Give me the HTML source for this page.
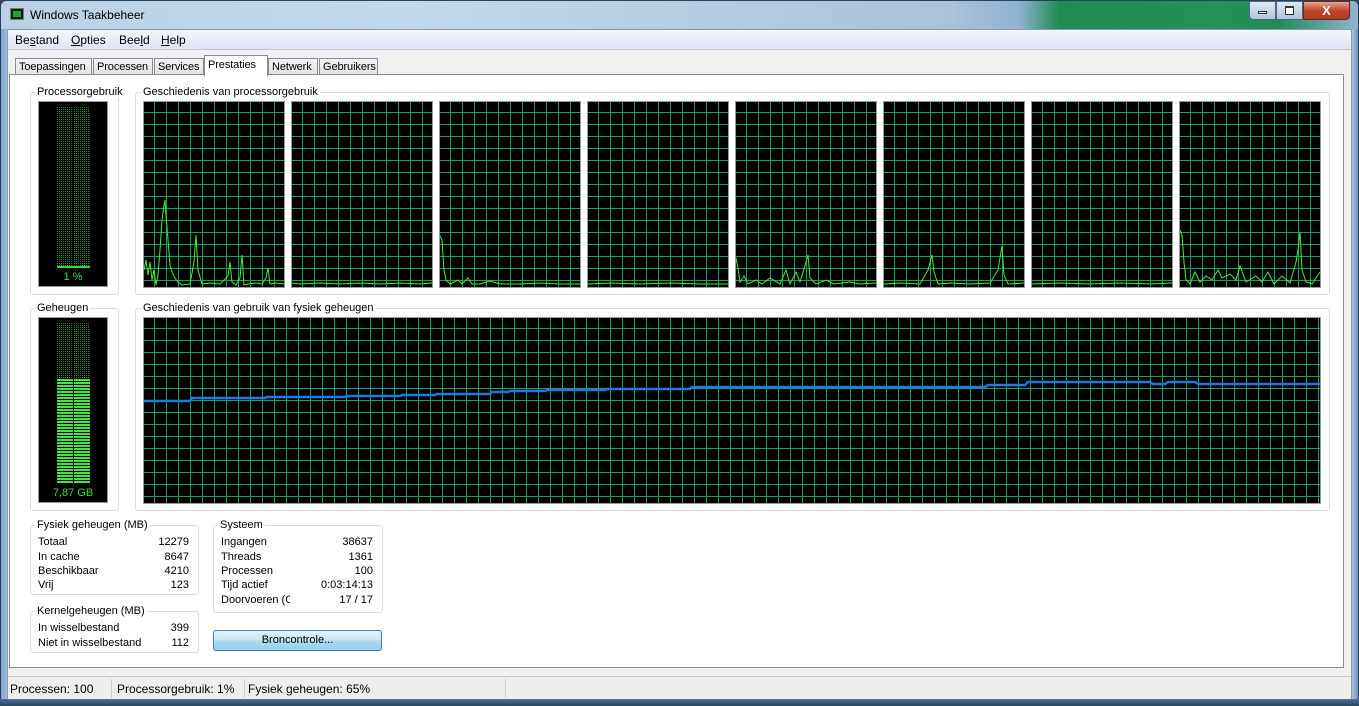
<!DOCTYPE html>
<html><head><meta charset="utf-8">
<style>
*{margin:0;padding:0;box-sizing:border-box}
body{width:1359px;height:706px;overflow:hidden;font-family:"Liberation Sans",sans-serif;font-size:11px;color:#000;background:#2b4a6b;position:relative}
.abs{position:absolute}
#frame{left:0;top:0;width:1359px;height:706px;background:linear-gradient(90deg,#7fa5c9 0,#a9c5e0 8px,#a9c5e0 1351px,#5f86ad 1359px);border:1px solid #2a3f57;border-radius:6px 6px 0 0}
#tbar{left:1px;top:1px;width:1357px;height:28px;background:linear-gradient(90deg,#b9d0e6 0,#c3d8ec 30%,#a9c2dc 70%,#8fb3d2 75%,#1f8a52 78%,#24915a 90%,#1e8a55 94%,#8fb3d2 100%);border-radius:6px 6px 0 0}
#bot{left:0;top:699px;width:1359px;height:7px;background:linear-gradient(#4f6f90,#2a4563)}
#title{left:30px;top:8px;font-size:12px;color:#000}
#client{left:7px;top:29px;width:1345px;height:670px;background:#f0f0f0;border:1px solid #8a9bb0}
#menu{left:8px;top:30px;width:1343px;height:20px;background:linear-gradient(#f3f6fb,#dde4f2);border-bottom:1px solid #b9c4d8}
#menu span{position:absolute;top:3px;font-size:12px}
.tab{position:absolute;top:58px;height:17px;border:1px solid #898c95;border-bottom:none;background:linear-gradient(#f2f2f2,#e3e3e3);font-size:11px;padding:2px 3px 0;letter-spacing:-0.1px}
#panel{left:9px;top:74px;width:1335px;height:594px;background:#fff;border:1px solid #898c95}
.grp{position:absolute;border:1px solid #dcdcdc;border-radius:3px}
.lbl{position:absolute;background:#fff;padding:0 2px;font-size:11px}
.grid{position:absolute;background-color:#000;border:1px solid #9a9a9a;
background-image:linear-gradient(90deg,#229a5a 0,#229a5a 1px,transparent 1px),linear-gradient(#229a5a 0,#229a5a 1px,transparent 1px);background-size:12px 12px,12px 12px;background-position:10px 10px}
.meter{position:absolute;background:#000;border:1px solid #9a9a9a}
.dots{position:absolute;width:16px;background:repeating-linear-gradient(90deg,#1f8a1f 0 1px,#000 1px 2px),#000;-webkit-mask:repeating-linear-gradient(#000 0 1px,transparent 1px 2px);mask:repeating-linear-gradient(#000 0 1px,transparent 1px 2px)}
.row{position:absolute;font-size:11px;white-space:nowrap}
.r{position:absolute;text-align:right}
#status{left:8px;top:676px;width:1343px;height:23px;background:#f0eeed;border-top:1px solid #c9c9c9}
#status span{position:absolute;top:5px;font-size:12px}
.sep{position:absolute;top:2px;width:1px;height:19px;background:#cfcfcf}
</style></head><body>
<div id="frame" class="abs"></div>
<div id="tbar" class="abs"></div>
<div id="bot" class="abs"></div>
<div class="abs" style="left:10px;top:8px;width:14px;height:12px;background:#0a2a0a;border:1px solid #777"><div style="margin:2px;height:6px;background:#2c9a3c"></div></div>
<div id="title" class="abs">Windows Taakbeheer</div>
<div class="abs" style="left:1249px;top:1px;width:27px;height:19px;border:1px solid #4d6785;border-radius:0 0 0 4px;background:linear-gradient(#dfe9f4,#aec4dc)"><div style="margin:9px 8px 0;height:3px;background:#fff;border:1px solid #333"></div></div>
<div class="abs" style="left:1276px;top:1px;width:27px;height:19px;border:1px solid #4d6785;background:linear-gradient(#dfe9f4,#aec4dc)"><div style="margin:4px 8px 0;height:9px;border:1px solid #333;border-top-width:2px;background:#fff"></div></div>
<div class="abs" style="left:1303px;top:1px;width:47px;height:19px;border:1px solid #6b2a1e;border-radius:0 0 4px 0;background:linear-gradient(#e8a592,#c2452c 50%,#b23a22);color:#fff;font-weight:bold;font-size:13px;text-align:center;line-height:17px">X</div>
<div id="client" class="abs"></div>
<div id="menu" class="abs"><span style="left:7px">Be<u>s</u>tand</span><span style="left:63px"><u>O</u>pties</span><span style="left:111px">Bee<u>l</u>d</span><span style="left:153px"><u>H</u>elp</span></div>
<div class="tab" style="left:15px;width:77px">Toepassingen</div>
<div class="tab" style="left:93px;width:60px">Processen</div>
<div class="tab" style="left:154px;width:50px">Services</div>
<div class="tab" style="left:268px;width:50px">Netwerk</div>
<div class="tab" style="left:319px;width:59px">Gebruikers</div>
<div id="panel" class="abs"></div>
<div class="tab" style="left:204px;top:55px;height:21px;width:64px;background:#fff;z-index:2;padding-top:3px">Prestaties</div>

<div class="grp" style="left:30px;top:92px;width:89px;height:203px"></div><div class="lbl" style="left:35px;top:86px">Processorgebruik</div>
<div class="grp" style="left:135px;top:92px;width:1195px;height:203px"></div><div class="lbl" style="left:141px;top:86px">Geschiedenis van processorgebruik</div>
<div class="grp" style="left:30px;top:308px;width:89px;height:203px"></div><div class="lbl" style="left:35px;top:302px">Geheugen</div>
<div class="grp" style="left:135px;top:308px;width:1195px;height:203px"></div><div class="lbl" style="left:141px;top:302px">Geschiedenis van gebruik van fysiek geheugen</div>

<div class="meter" style="left:38px;top:101px;width:70px;height:186px">
<div class="dots" style="left:18px;top:5px;height:160px"></div>
<div class="dots" style="left:35px;top:5px;height:160px"></div>
<div class="abs" style="left:18px;top:164px;width:33px;height:2px;background:#2be02b"></div>
<div class="abs" style="left:0;top:169px;width:68px;text-align:center;color:#2be02b;font-size:11px">1 %</div>
</div>
<div class="meter" style="left:38px;top:317px;width:70px;height:186px">
<div class="dots" style="left:18px;top:5px;height:56px"></div>
<div class="dots" style="left:35px;top:5px;height:56px"></div>
<div class="abs" style="left:18px;top:61px;width:16px;height:105px;background:repeating-linear-gradient(#3ee83e 0 2px,#000 2px 3px)"></div>
<div class="abs" style="left:35px;top:61px;width:16px;height:105px;background:repeating-linear-gradient(#3ee83e 0 2px,#000 2px 3px)"></div>
<div class="abs" style="left:0;top:169px;width:68px;text-align:center;color:#2be02b;font-size:11px">7,87 GB</div>
</div>

<div class="grid" style="left:143px;top:101px;width:142px;height:187px"></div>
<div class="grid" style="left:291px;top:101px;width:142px;height:187px"></div>
<div class="grid" style="left:439px;top:101px;width:142px;height:187px"></div>
<div class="grid" style="left:587px;top:101px;width:142px;height:187px"></div>
<div class="grid" style="left:735px;top:101px;width:142px;height:187px"></div>
<div class="grid" style="left:883px;top:101px;width:142px;height:187px"></div>
<div class="grid" style="left:1031px;top:101px;width:142px;height:187px"></div>
<div class="grid" style="left:1179px;top:101px;width:142px;height:187px"></div>
<svg class="abs" style="left:0;top:0" width="1359" height="706" fill="none" stroke="#3ef03e" stroke-width="1">
<polyline points="144,270 146,260 148,275 150,262 152,280 154,270 156,285 158,275 160,250 162,220 164,205 165,200 166,215 168,240 170,265 172,272 175,278 178,282 182,285 190,284 194,262 196,235 198,270 202,284 210,283 220,284 228,276 230,262 232,282 236,285 240,278 242,255 244,285 248,284 256,283 262,284 266,278 268,268 270,284 276,283 284,284"/>
<polyline points="292,283 300,284 320,283 340,284 360,283 380,284 400,283 420,284 432,283"/>
<polyline points="440,236 442,240 444,270 446,280 450,284 458,280 462,284 468,278 472,284 480,284 490,281 500,284 520,284 540,283 560,284 580,284"/>
<polyline points="588,284 610,283 640,284 670,283 700,284 728,284"/>
<polyline points="736,258 738,268 740,282 744,276 748,284 756,280 762,284 770,278 780,284 786,270 790,284 796,272 800,282 806,262 808,255 810,278 816,284 826,280 834,284 850,282 860,284 876,283"/>
<polyline points="884,284 900,283 920,284 928,270 932,255 934,272 938,284 950,283 970,284 990,283 998,270 1002,246 1004,275 1008,284 1024,283"/>
<polyline points="1032,284 1060,283 1090,284 1120,283 1150,284 1172,283"/>
<polyline points="1180,230 1182,235 1184,262 1186,280 1190,284 1195,272 1200,282 1206,276 1212,280 1218,270 1222,278 1230,274 1236,280 1240,266 1246,282 1256,276 1262,282 1268,272 1274,284 1282,276 1290,283 1296,262 1298,250 1300,232 1302,270 1306,282 1312,284 1316,278 1320,272"/>
</svg>

<div class="grid" style="left:143px;top:317px;width:1178px;height:187px"></div>
<svg class="abs" style="left:0;top:0" width="1359" height="706" fill="none" stroke="#1e78e0" stroke-width="2.5">
<polyline points="144,401 190,401 192,398 265,398 267,397 345,397 347,396 400,396 402,395 435,395 437,394 490,394 492,392 508,392 510,391 545,391 547,390 605,390 607,389 690,389 692,387 985,387 988,385 1025,385 1028,382 1150,382 1153,384 1165,384 1168,382 1195,382 1198,384 1320,384"/>
</svg>

<div class="grp" style="left:30px;top:525px;width:169px;height:70px"></div><div class="lbl" style="left:35px;top:519px">Fysiek geheugen (MB)</div>
<div class="row" style="left:38px;top:536px">Totaal</div><div class="row r" style="left:130px;width:59px;top:536px">12279</div>
<div class="row" style="left:38px;top:551px">In cache</div><div class="row r" style="left:130px;width:59px;top:551px">8647</div>
<div class="row" style="left:38px;top:565px">Beschikbaar</div><div class="row r" style="left:130px;width:59px;top:565px">4210</div>
<div class="row" style="left:38px;top:579px">Vrij</div><div class="row r" style="left:130px;width:59px;top:579px">123</div>
<div class="grp" style="left:30px;top:611px;width:169px;height:42px"></div><div class="lbl" style="left:35px;top:605px">Kernelgeheugen (MB)</div>
<div class="row" style="left:38px;top:622px">In wisselbestand</div><div class="row r" style="left:130px;width:59px;top:622px">399</div>
<div class="row" style="left:38px;top:637px">Niet in wisselbestand</div><div class="row r" style="left:130px;width:59px;top:637px">112</div>
<div class="grp" style="left:213px;top:525px;width:170px;height:88px"></div><div class="lbl" style="left:218px;top:519px">Systeem</div>
<div class="row" style="left:221px;top:536px">Ingangen</div><div class="row r" style="left:300px;width:73px;top:536px">38637</div>
<div class="row" style="left:221px;top:551px">Threads</div><div class="row r" style="left:300px;width:73px;top:551px">1361</div>
<div class="row" style="left:221px;top:565px">Processen</div><div class="row r" style="left:300px;width:73px;top:565px">100</div>
<div class="row" style="left:221px;top:579px">Tijd actief</div><div class="row r" style="left:300px;width:73px;top:579px">0:03:14:13</div>
<div class="row" style="left:221px;top:594px;width:69px;overflow:hidden">Doorvoeren (GB)</div><div class="row r" style="left:300px;width:73px;top:594px">17 / 17</div>
<div class="abs" style="left:213px;top:630px;width:169px;height:21px;border:1px solid #3c7fb1;border-radius:3px;background:linear-gradient(#e5f4fc 0,#c4e5f6 50%,#a9daf2 51%,#98d0ef);text-align:center;line-height:19px;font-size:11px">Broncontrole...</div>

<div id="status" class="abs">
<span style="left:2px">Processen: 100</span><div class="sep" style="left:103px"></div>
<span style="left:109px">Processorgebruik: 1%</span><div class="sep" style="left:236px"></div>
<span style="left:240px">Fysiek geheugen: 65%</span><div class="sep" style="left:497px"></div>
</div>
</body></html>
